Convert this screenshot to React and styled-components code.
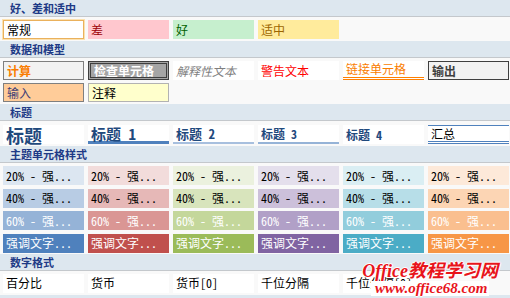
import styled, { createGlobalStyle, css } from "styled-components";

const GlobalStyle = createGlobalStyle`
  html, body {
    margin: 0;
    padding: 0;
    background: #f9f9f9;
  }
  body {
    width: 510px;
    height: 298px;
    overflow: hidden;
    font-family: "Noto Sans Mono CJK SC", "Noto Sans CJK SC", "Liberation Mono", monospace;
  }
`;

const sections = [
  {
    title: "好、差和适中",
    rows: [["normal", "常规"], ["bad", "差"], ["good", "好"], ["neutral", "适中"]],
  },
  {
    title: "数据和模型",
    rows: [
      ["calc", "计算"],
      ["check", "检查单元格"],
      ["explain", "解释性文本"],
      ["warn", "警告文本"],
      ["link", "链接单元格"],
      ["output", "输出"],
      ["input", "输入"],
      ["note", "注释"],
    ],
  },
  {
    title: "标题",
    heading: true,
    rows: [
      ["title", "标题"],
      ["h1", "标题 1"],
      ["h2", "标题 2"],
      ["h3", "标题 3"],
      ["h4", "标题 4"],
      ["total", "汇总"],
    ],
  },
];

const accents = [
  ["#dce6f1", "#b8cce4", "#95b3d7", "#4f81bd"],
  ["#f2dcdb", "#e6b8b7", "#da9694", "#c0504d"],
  ["#ebf1de", "#d8e4bc", "#c4d79b", "#9bbb59"],
  ["#e4dfec", "#ccc0da", "#b1a0c7", "#8064a2"],
  ["#daeef3", "#b7dee8", "#92cddc", "#4bacc6"],
  ["#fde9d9", "#fcd5b4", "#fabf8f", "#f79646"],
];

const accentLabels = ["20% - 强...", "40% - 强...", "60% - 强...", "强调文字..."];

const numberFormats = ["百分比", "货币", "货币[0]", "千位分隔", "千位分隔[0]"];

const heading = css`
  background: #fff;
  color: #1f497d;
  font-weight: bold;
  overflow: visible;
`;

const variants = {
  normal: css`
    background: #fff;
    border: 1px solid #eab15c;
    box-shadow: 0 0 0 1px #fbe1b0;
  `,
  bad: css`background: #ffc7ce; color: #9c0006;`,
  good: css`background: #c6efce; color: #006100;`,
  neutral: css`background: #ffeb9c; color: #9c6500;`,
  calc: css`
    background: #f2f2f2;
    border: 1px solid #7f7f7f;
    color: #fa7d00;
    font-weight: bold;
  `,
  check: css`
    background: #a5a5a5;
    border: 3px double #3f3f3f;
    color: #fff;
    font-weight: bold;
  `,
  explain: css`background: #fff; color: #7f7f7f; font-style: italic;`,
  warn: css`background: #fff; color: #ff0000;`,
  link: css`background: #fff; color: #fa7d00; border-bottom: 3px double #ff8001;`,
  output: css`
    background: #f2f2f2;
    border: 1px solid #3f3f3f;
    color: #3f3f3f;
    font-weight: bold;
  `,
  input: css`background: #ffcc99; border: 1px solid #7f7f7f; color: #3f3f76;`,
  note: css`background: #ffffcc; border: 1px solid #b2b2b2;`,
  plain: css`background: #fff;`,
  title: css`
    ${heading}
    font-size: 18px;
    font-family: "Noto Sans CJK SC", sans-serif;
  `,
  h1: css`
    ${heading}
    font-size: 15px;
    border-bottom: 3px solid #4f81bd;
  `,
  h2: css`
    ${heading}
    font-size: 13px;
    border-bottom: 2px solid #a7bfde;
  `,
  h3: css`
    ${heading}
    border-bottom: 2px solid #95b3d7;
  `,
  h4: heading,
  total: css`
    background: #fff;
    border-top: 1px solid #4f81bd;
    border-bottom: 3px double #4f81bd;
  `,
};

const Page = styled.div`
  position: relative;
  width: 510px;
  height: 298px;
  overflow: hidden;
`;

const Band = styled.div`
  height: 16px;
  padding-left: 10px;
  display: flex;
  align-items: center;
  background: #dde7ef;
  border-bottom: 1px solid #c4c8cc;
  color: #1e3a86;
  font-family: "Noto Sans CJK SC", sans-serif;
  font-size: 11px;
  font-weight: bold;
`;

const Grid = styled.div`
  display: grid;
  grid-template-columns: repeat(6, 81px);
  column-gap: 4px;
  row-gap: ${(p) => p.$gap || 3}px;
  padding: ${(p) => p.$pad || "3px 0 2px 3px"};
`;

const Cell = styled.div`
  box-sizing: border-box;
  height: 19px;
  padding-left: 3px;
  display: flex;
  align-items: center;
  overflow: hidden;
  white-space: nowrap;
  font-size: 12px;
  line-height: 1;
  color: #000;
  ${(p) => variants[p.$kind]}
`;

const AccentCell = styled(Cell)`
  color: ${(p) => (p.$light ? "#000" : "#fff")};
`;

const Watermark = styled.div`
  position: absolute;
  right: 12px;
  bottom: 2px;
  display: flex;
  flex-direction: column;
  align-items: center;
  color: #e8141b;
  font-weight: bold;
  font-style: italic;
  font-family: "Liberation Serif", "Noto Sans CJK SC", serif;
  line-height: 1;
  text-shadow: 1px 0 0 #fff, -1px 0 0 #fff, 0 1px 0 #fff, 0 -1px 0 #fff;
`;

const MarkTitle = styled.span`
  font-size: 18px;
`;

const MarkUrl = styled.span`
  font-size: 15px;
  margin-top: 1px;
  padding: 0 2px 0 4px;
  background: #fff;
`;

export default function App() {
  return (
    <Page>
      <GlobalStyle />
      {sections.map((s) => (
        <section key={s.title}>
          <Band>{s.title}</Band>
          <Grid $pad={s.heading ? "4px 0 2px 3px" : undefined}>
            {s.rows.map(([kind, label]) => (
              <Cell key={label} $kind={kind}>
                {label}
              </Cell>
            ))}
          </Grid>
        </section>
      ))}
      <Band>主题单元格样式</Band>
      <Grid $gap={3.5} $pad="3px 0 1px 3px">
        {accentLabels.map((label, level) =>
          accents.map((shades, i) => (
            <AccentCell
              key={`${level}-${i}`}
              $light={level < 2}
              style={{ background: shades[level] }}
            >
              {label}
            </AccentCell>
          ))
        )}
      </Grid>
      <Band>数字格式</Band>
      <Grid>
        {numberFormats.map((label) => (
          <Cell key={label} $kind="plain">
            {label}
          </Cell>
        ))}
      </Grid>
      <Band />
      <Watermark>
        <MarkTitle>Office教程学习网</MarkTitle>
        <MarkUrl>www.office68.com</MarkUrl>
      </Watermark>
    </Page>
  );
}
